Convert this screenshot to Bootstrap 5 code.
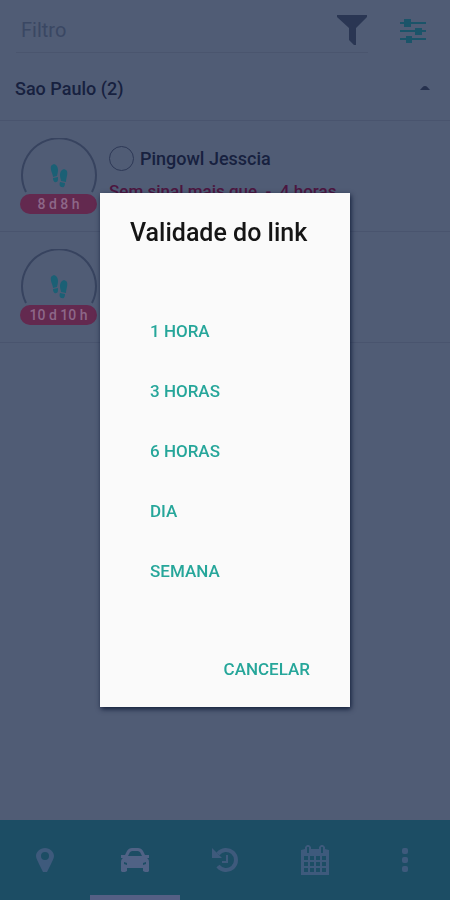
<!DOCTYPE html>
<html lang="pt-BR">
<head>
<meta charset="utf-8">
<meta name="viewport" content="width=device-width, initial-scale=1">
<title>Validade do link</title>
<link href="https://cdn.jsdelivr.net/npm/bootstrap@5.3.0/dist/css/bootstrap.min.css" rel="stylesheet">
<style>
  body { font-family: Roboto, sans-serif; background: #505c75; color: #17213f; }
  .plain-btn { background: none; border: 0; padding: 0; color: inherit; display: flex; }
  .line-b { border-bottom: 1px solid #49546e; }
  .filter-row { height: 60px; padding: 8px 24px 6px 16px; }
  .filter-box { height: 45px; border-bottom: 1px solid #4a556e; padding-left: 5px; }
  .filter-box input { font-size: 20px; color: #313d58; min-width: 0; }
  .filter-box input::placeholder { color: #3a4763; opacity: 1; }
  .group-head { height: 61px; padding: 0 20px 4px 15px; font-size: 18px; font-weight: 500; }
  .person { height: 111px; padding: 17px 16px 0 20px; gap: 12px; }
  .avatar { width: 77px; height: 78px; display: flex; flex-direction: column; align-items: center; }
  .ring { width: 76px; height: 56px; }
  .age { width: 77px; height: 20px; line-height: 20px; border-radius: 10px; background: #63294f; color: #8d6788; font-size: 14px; font-weight: 500; text-align: center; }
  .person-name { font-size: 18px; font-weight: 500; line-height: 24px; gap: 6px; }
  .pick { width: 25px; height: 25px; margin: 0; appearance: none; border: 1px solid #2d3856; border-radius: 50%; background: none; }
  .warn-text { font-size: 17px; font-weight: 500; color: #4c1640; margin-top: 10px; line-height: 20px; }
  .tabs { height: 80px; background: #1c4d64; color: #3e5a7c; }
  .tab-btn { border: 0; border-bottom: 5px solid transparent; border-top: 4px solid transparent; background: none; color: inherit; }
  .tab-btn.on { color: #506285; border-bottom-color: #555f84; }
  .scrim { z-index: 10; }
  .dialog-box { width: calc(100% - 200px); max-width: 560px; margin: 0 auto; padding: 23px 40px 17px 30px; background: #fafafa; box-shadow: 1px 2px 5px #101c38; }
  .dialog-box h1 { font-size: 25px; line-height: 34px; font-weight: 500; color: #151515; white-space: nowrap; }
  .choices { padding: 52px 0 0 20px; margin-bottom: 48px; }
  .choice { background: none; border: 0; padding: 0; height: 60px; color: #26a69a; font-size: 17px; font-weight: 500; text-align: left; }
  .cancel { height: 40px; }
</style>
<script src="https://cdn.jsdelivr.net/npm/bootstrap@5.3.0/dist/js/bootstrap.bundle.min.js"></script>
</head>
<body>
<svg class="d-none" xmlns="http://www.w3.org/2000/svg">
  <symbol id="ring" viewBox="0 0 76 56"><path d="M5 54A37 37 0 1 1 71 54" fill="none" stroke="#37435f" stroke-width="2"/>
    <g fill="#1b6075"><path d="M30 28c3-4 7-1 7 4 0 3-1 5-1 6l-4 1c0-3-3-7-2-11zM32 40l5-1c0 3 0 5-2 5-2 1-3-2-3-4z"/><path d="M46 33c-3-4-7-1-7 4 0 3 1 4 1 6l5 1c0-4 2-7 1-11zM39 44l5 1c0 3-1 5-3 4-2 0-3-2-2-5z"/></g></symbol>
</svg>
<div class="min-vh-100 d-flex flex-column">
  <header class="filter-row d-flex">
    <div class="filter-box d-flex align-items-center flex-grow-1">
      <input class="flex-grow-1 border-0 bg-transparent p-0" type="text" placeholder="Filtro" aria-label="Filtro">
      <button class="plain-btn" type="button" aria-label="Filtrar"><svg width="32" height="32" viewBox="0 0 32 32"><path fill="#2a3653" d="M1 1h30v2L20 14v17h-2l-5-5V14L1 3z"/></svg></button>
    </div>
    <button class="plain-btn align-items-center ms-4 me-0" type="button" aria-label="Ajustes">
      <svg class="ms-2" width="26" height="26" viewBox="0 0 26 26" fill="#1b5469"><path d="M0 4h4V1h7v3h15v2H11v3H4V6H0zM0 12h15v-2h7v2h4v2h-4v3h-7v-3H0zM0 20h6v-2h6v2h14v2H12v3H6v-3H0z"/></svg>
    </button>
  </header>
  <main class="flex-grow-1">
    <button class="group-head plain-btn line-b w-100 align-items-center justify-content-between" type="button">
      <span>Sao Paulo (2)</span><svg width="10" height="6" viewBox="0 0 10 6"><path fill="#26314e" d="M0 5c2-2 3-4 5-4s3 2 5 4z"/></svg>
    </button>
    <section class="person line-b d-flex">
      <div class="avatar"><svg class="ring"><use href="#ring"/></svg><div class="age">8 d 8 h</div></div>
      <div class="flex-grow-1 pt-2">
        <label class="person-name d-flex align-items-center"><input class="pick" type="radio" name="person">Pingowl Jesscia</label>
        <div class="warn-text">Sem sinal mais que&nbsp; -&nbsp; 4 horas</div>
      </div>
    </section>
    <section class="person line-b d-flex">
      <div class="avatar"><svg class="ring"><use href="#ring"/></svg><div class="age">10 d 10 h</div></div>
    </section>
  </main>
  <nav class="tabs d-flex" aria-label="Principal">
    <button class="tab-btn flex-fill w-100" type="button" aria-label="Mapa"><svg width="18" height="26" viewBox="0 0 18 26"><path fill="currentColor" fill-rule="evenodd" d="M9 1c5 0 9 4 9 8 0 3-2 5-3 8l-4 8H7L3 17C2 14 0 12 0 9c0-4 4-8 9-8zm0 4a4 4 0 1 0 0 8 4 4 0 0 0 0-8z"/></svg></button>
    <button class="tab-btn on flex-fill w-100" type="button" aria-label="Veículos"><svg width="30" height="26" viewBox="0 0 30 26"><path fill="currentColor" fill-rule="evenodd" d="M1 8h4l2-4c1-2 3-3 5-3h6c2 0 4 1 5 3l2 4h4v3h-2c2 1 2 3 2 5v8l-1 1h-3l-2-1v-3H7v3l-2 1H2l-1-1v-8c0-2 0-4 2-5H1zm7 1h14l-2-4-2-1h-6l-2 1zm-4 6v2l3 1v-2zm22 0-3 1v2l3-1z"/></svg></button>
    <button class="tab-btn flex-fill w-100" type="button" aria-label="Histórico"><svg width="28" height="26" viewBox="0 0 28 26"><path fill="none" stroke="currentColor" stroke-width="4" d="M7 7a10 10 0 1 1 0 12"/><path fill="currentColor" d="M1 1l10 10H1z"/><path fill="none" stroke="currentColor" stroke-width="2" d="M16 8v7h-5"/></svg></button>
    <button class="tab-btn flex-fill w-100" type="button" aria-label="Calendário"><svg width="30" height="30" viewBox="0 0 30 30"><path fill="currentColor" fill-rule="evenodd" d="M1 5l4-1V2l2-2h2l2 2v2h8V2l2-2h2l2 2v2l4 1v25H1zM4 11v4h4v-4zm6 0v4h4v-4zm6 0v4h4v-4zm6 0v4h4v-4zM4 17v4h4v-4zm6 0v4h4v-4zm6 0v4h4v-4zm6 0v4h4v-4zM4 23v4h4v-4zm6 0v4h4v-4zm6 0v4h4v-4zm6 0v4h4v-4zM7 2v6h2V2zm14 0v6h2V2z"/></svg></button>
    <button class="tab-btn flex-fill w-100" type="button" aria-label="Mais"><svg width="8" height="26" viewBox="0 0 8 26" fill="currentColor"><rect x="1" y="1" width="6" height="6" rx="2"/><rect x="1" y="10" width="6" height="6" rx="2"/><rect x="1" y="19" width="6" height="6" rx="2"/></svg></button>
  </nav>
</div>
<div class="scrim position-fixed top-0 start-0 w-100 h-100 d-flex align-items-center">
  <div class="dialog-box d-flex flex-column" role="dialog" aria-modal="true" aria-labelledby="dlg-title">
    <h1 id="dlg-title" class="mb-0">Validade do link</h1>
    <div class="choices d-flex flex-column">
      <button class="choice" type="button">1 HORA</button>
      <button class="choice" type="button">3 HORAS</button>
      <button class="choice" type="button">6 HORAS</button>
      <button class="choice" type="button">DIA</button>
      <button class="choice" type="button">SEMANA</button>
    </div>
    <button class="choice cancel align-self-end" type="button">CANCELAR</button>
  </div>
</div>
</body>
</html>
